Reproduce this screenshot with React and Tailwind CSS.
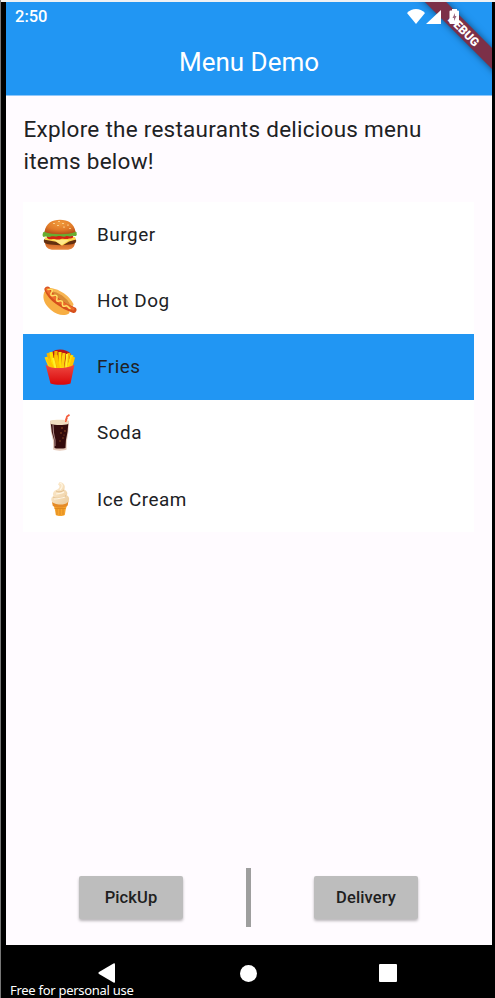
import React from "react";

function Burger() {
  return (
    <svg viewBox="0 0 36 36" className="h-9 w-9">
      <defs>
        <radialGradient id="bun" cx=".5" cy=".25" r=".75">
          <stop offset="0" stopColor="#f19a3c" />
          <stop offset=".6" stopColor="#e07a28" />
          <stop offset="1" stopColor="#b9501a" />
        </radialGradient>
        <linearGradient id="bunBase" x1="0" y1="0" x2="0" y2="1">
          <stop offset="0" stopColor="#c75b1d" />
          <stop offset="1" stopColor="#ea8a40" />
        </linearGradient>
      </defs>
      <path d="M3 25c0 5 3 7.800 9 7.800h12c6 0 9-2.800 9-7.800z" fill="url(#bunBase)" />
      <path d="M2 22.500c3-1 29-1 32 0 .8 2-.5 4-3 4.500-8 1.500-18 1.500-26 0-2.500-.5-3.800-2.500-3-4.500z" fill="#633011" />
      <path d="M2.500 20.500 33 20l1 2.500-7 2-7 4.300-6-4-11-2z" fill="#ffd64f" />
      <path d="M12 23l7.700 5L27 23z" fill="#ffe98a" />
      <path d="M5 18.500h26c1 2-1 3.500-4 3-3 1.500-5-.5-8 .5-4 1.500-6-.5-9 .2-4 .8-6-1.700-5-3.700z" fill="#d32413" />
      <path d="M1.500 15c8-2 25-2 33 0l.3 3c-1.600 2.500-3.500-.2-5.500 1.200-2 1.200-3.700-.8-5.800.2-3 1.200-5-.7-8-.2-3 .8-5-.4-7 .5-3 1-4-1.200-6 .1-2.500.7-2.200-3-1-4.800z" fill="#68ad31" />
      <path d="M2.500 15C4 6 10 2.800 18 2.800S32 6 33.600 15c-8 3-23 3-31.100 0z" fill="url(#bun)" />
      <g fill="#ffe0a3">
        <ellipse cx="17" cy="4.500" rx="1" ry=".5" /><ellipse cx="12" cy="6.500" rx="1" ry=".6" />
        <ellipse cx="21" cy="6.500" rx="1" ry=".6" /><ellipse cx="16" cy="8.500" rx="1" ry=".6" />
        <ellipse cx="26" cy="8" rx="1" ry=".6" /><ellipse cx="22" cy="10" rx="1" ry=".6" />
        <ellipse cx="28" cy="11.500" rx=".9" ry=".6" />
      </g>
    </svg>
  );
}

function HotDog() {
  return (
    <svg viewBox="0 0 36 36" className="h-9 w-9" fill="none" strokeLinecap="round">
      <path d="M8 6.500C16 6 28 15 31.500 25c-1 2-3 2-5 1L7 10z" fill="#d98a35" />
      <path d="M2 9.500C0 16 3 22 9 27c6 5 13 6.500 18 3.500 1-1 .5-3-1-4C20 25 11 19 7 10c-1-2.500-4-3-5-.5z" fill="#f7ae43" />
      <path d="M9 6.500c8 1 17 7 21 15" stroke="#f8b552" strokeWidth="3" />
      <path d="M5.500 6.500C9 15 20 23 31.500 27" stroke="#d6501c" strokeWidth="6" />
      <path d="M5 6C9 14 20 21 31 26" stroke="#ee6c2d" strokeWidth="3" />
      <path d="M6 6.500c5-1 5 1 3.500 3s-.5 4 2 3 4 .5 3.500 2.500-.5 4 2 3 4 .5 3.500 2.500.5 3.500 3 2.500 2.500 2 4.500 2.500" stroke="#ffe065" strokeWidth="1.500" />
    </svg>
  );
}

function Fries() {
  return (
    <svg viewBox="0 0 36 38" className="h-[38px] w-9">
      <defs>
        <linearGradient id="carton" x1="0" y1="0" x2="0" y2="1">
          <stop offset="0" stopColor="#ef4b43" /><stop offset="1" stopColor="#d90609" />
        </linearGradient>
      </defs>
      <path d="M10 4c5-4 15-3 19 2l-2 14H9z" fill="#b91518" />
      <g strokeWidth="3.200" strokeLinecap="butt">
        <path d="m6 5 5 16M27 5l-4 17M14 3l-1 19" stroke="#f4b400" />
        <path d="m9 4 3 18M18 4v19M30 7l-4 14" stroke="#ffe000" />
        <path d="m4 9 4 10M22 5l-2 18" stroke="#ffd10c" />
        <path d="m31.500 9-3 11M14 7l3 16M6 11l5 10" stroke="#ffc400" />
        <path d="M25 6l-1 16M11 10l3 12" stroke="#fff02b" strokeWidth="2" />
      </g>
      <path d="M3.500 16.500c3 2.500 7 3.500 10 3.500 6 .5 14-.5 19-3.500L28.500 35.500c-4 1.700-16 1.700-20 0z" fill="url(#carton)" />
    </svg>
  );
}

function Soda() {
  return (
    <svg viewBox="0 0 36 38" className="h-[38px] w-9">
      <path d="m23 9 2-6.500 2.500-1.700" fill="none" stroke="#f45c3c" strokeWidth="1.700" />
      <path d="M8 7c2-1.500 17-1.500 19 0l-.6 11-1.500 9-.3 8.500c-2 1.500-11.500 1.500-13.500 0L11 27 9 18z" fill="#e5cbbb" />
      <path d="M8.800 9.500h17.500l-.7 8-1.700 9-.4 7.500c-2 .8-9.500.8-11 0L12 26l-2.200-8z" fill="#340b0b" />
      <path d="M8.500 6.700c3-1.300 15-1.300 18 0l-.3 3.300c-4 1.300-13 1.300-17.500 0z" fill="#f1dec0" />
      <path d="m23.500 8 1.500-4" stroke="#f45c3c" strokeWidth="1.500" />
      <path d="m11 11 .5 8 1.500 7v6" stroke="#a98480" strokeWidth="1.100" fill="none" />
      <g fill="#995126"><circle cx="20" cy="14" r=".8" /><circle cx="23" cy="17" r=".8" /><circle cx="19" cy="19" r=".8" /><circle cx="21" cy="24" r=".7" /><circle cx="18" cy="27" r=".7" /><circle cx="22" cy="21" r=".6" /></g>
    </svg>
  );
}

function IceCream() {
  return (
    <svg viewBox="0 0 36 38" className="h-[38px] w-9">
      <defs>
        <linearGradient id="cream" x1="0" y1="0" x2="1" y2="1">
          <stop offset="0" stopColor="#fff0d6" /><stop offset="1" stopColor="#ebcb9c" />
        </linearGradient>
      </defs>
      <path d="M10.500 23h15.300l-2 6-1 6c-2 1.300-7 1.300-9 0l-1-6z" fill="#f6a42d" />
      <path d="M15 29v6m3-6v6m3-6v6M12.500 28.500h11" stroke="#d9831c" strokeWidth=".8" />
      <path d="M10 21c2 2.500 14 2.500 16.500-.5l-.8 5c-3 2.700-12 2.700-15 .3z" fill="#e58b27" />
      <path d="M17.500 2c4 0 6.500 4 4.800 7.500 3 1.500 3.700 4 2.600 5.700 4 2.500 2.300 7.700-2.200 8.700-4.500 1.200-12 .3-13.200-3.200-.8-2 .3-4 2-4.600-1.400-3 .4-5.200 2.700-6C17 9 19 6.500 16 4.500z" fill="url(#cream)" />
      <path d="M14 11c2 1.500 6 1 8-1m-11 7c3 2 10 2 13-1.500" fill="none" stroke="#dcb885" strokeWidth=".8" />
      <path d="M18 3c3 1 3 4 0 7m-4 4c3-.3 6-.6 8-2m-10 7c4-.2 8-.7 11-2" fill="none" stroke="#fff6e4" strokeWidth="1.200" />
    </svg>
  );
}

const items = [
  { name: "Burger", Icon: Burger },
  { name: "Hot Dog", Icon: HotDog },
  { name: "Fries", Icon: Fries, selected: true },
  { name: "Soda", Icon: Soda },
  { name: "Ice Cream", Icon: IceCream },
];

function ActionButton({ children }) {
  return (
    <button className="h-[43px] w-[104px] rounded-[2px] bg-[#bdbdbd] pt-[2px] text-[16.500px] font-medium tracking-[0.1px] text-[#202020] shadow-[0_2px_3px_rgba(0,0,0,0.28)]">
      {children}
    </button>
  );
}

export default function App() {
  return (
    <div className="relative flex h-[998px] w-[495px] flex-col overflow-hidden border-l border-[#777777] bg-black font-[Roboto,sans-serif] text-[#202124]">
      <div className="h-[2px] shrink-0 bg-[#eff1f3]" />
      <main className="ml-[5px] flex h-[943px] w-[486px] shrink-0 flex-col bg-[#fffbff]">
        <header className="relative h-[94px] shrink-0 overflow-hidden border-b border-[#90c7fa] bg-[#2196f3] text-white">
          <div className="relative z-10 flex h-[29px] items-center justify-between pl-[9px] pr-[31px]">
            <span className="pt-[2px] text-[16.500px] font-medium">2:50</span>
            <svg viewBox="0 0 54 18" className="h-[18px] w-[54px]" fill="white">
              <path d="M0 5C5-.2 13-.2 18 5L9 16z" />
              <path d="M34 2v14H19z" />
              <path d="M42.500 3.500q0-1 1-1H45V1h5v1.500h1q1 0 1 1V15q0 1-1 1h-7.500q-1 0-1-1z" />
              <path d="m48 5-2.500 5H47v3l2.500-5H48z" fill="#9c6b83" />
            </svg>
          </div>
          <h1 className="pt-[15px] text-center text-[26px] font-normal leading-[32px]">Menu Demo</h1>
          <div className="absolute left-[398px] top-[20.500px] flex h-[15px] w-[120px] rotate-45 items-center justify-center bg-[#7c3048] text-[12px] font-black leading-none text-white shadow-[0_0_7px_rgba(0,0,0,0.5)]">
            DEBUG
          </div>
        </header>
        <p className="ml-[17.500px] mt-[17px] h-[64px] w-[430px] shrink-0 text-[22.500px] leading-[32px] tracking-[0.260px]">
          Explore the restaurants delicious menu items below!
        </p>
        <ul className="ml-[17px] mt-[24.500px] w-[451px] bg-white">
          {items.map(({ name, Icon, selected }) => (
            <li key={name} className={selected ? "flex h-[66.200px] items-center bg-[#2196f3] pl-[19px]" : "flex h-[66.200px] items-center pl-[19px]"}>
              <Icon />
              <span className="ml-[19px] pt-px text-[18.900px] tracking-[0.540px]">{name}</span>
            </li>
          ))}
        </ul>
        <footer className="mb-[18px] mt-auto flex h-[59px] items-center">
          <div className="flex flex-1 justify-center pl-[10px]"><ActionButton>PickUp</ActionButton></div>
          <div className="h-[59px] w-[5px] bg-[#9e9e9e]" />
          <div className="flex flex-1 justify-center pr-[11px]"><ActionButton>Delivery</ActionButton></div>
        </footer>
      </main>
      <nav className="ml-[5px] flex h-[53px] w-[486px] items-center justify-between pl-[91px] pr-[95px] pt-[3px]">
        <svg viewBox="0 0 20 22" className="h-[22px] w-5" fill="white"><path d="M2 10 16.500 1.500q1.500-.8 1.500 1v17q0 1.800-1.500 1L2 12q-1.500-1 0-2z" /></svg>
        <div className="h-[17px] w-[17px] rounded-full bg-white" />
        <div className="h-[18px] w-[18px] rounded-[1px] bg-white" />
      </nav>
      <div className="absolute bottom-0 left-[9px] font-['Noto_Sans',sans-serif] text-[13px] leading-[15px] tracking-[-0.280px] text-white">Free for personal use</div>
    </div>
  );
}
